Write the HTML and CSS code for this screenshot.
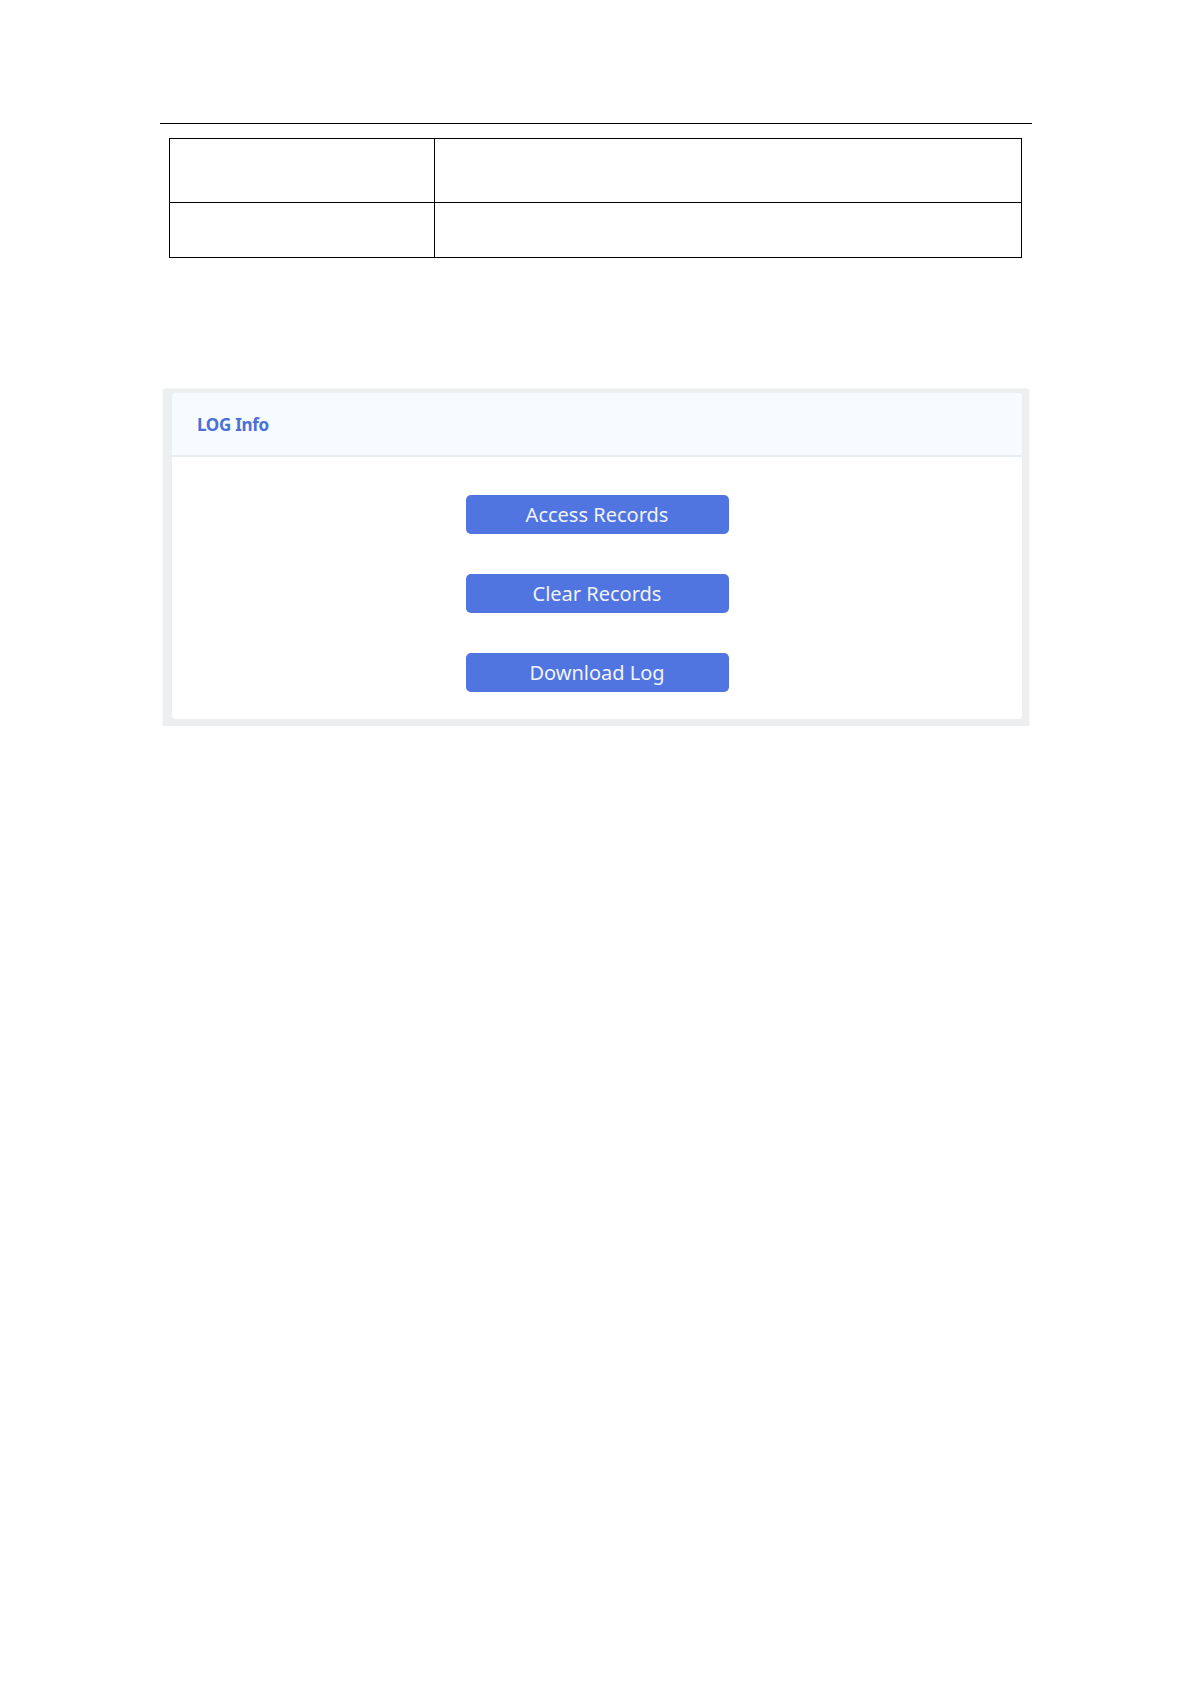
FILE: index.html
```html
<!DOCTYPE html>
<html lang="en">
<head>
    <meta charset="UTF-8">
    <meta name="viewport" content="width=device-width, initial-scale=1.0">
    <title>LOG Info</title>
    <link rel="stylesheet" href="styles.css">
</head>
<body>
    <div class="page">
        <hr class="rule">

        <table class="doc-table">
            <tr class="row-tall">
                <td class="col-key"></td>
                <td class="col-val"></td>
            </tr>
            <tr class="row-short">
                <td class="col-key"></td>
                <td class="col-val"></td>
            </tr>
        </table>

        <div class="shot">
            <div class="card">
                <div class="card-head">LOG Info</div>
                <div class="card-body">
                    <button class="btn">Access Records</button>
                    <button class="btn">Clear Records</button>
                    <button class="btn">Download Log</button>
                </div>
            </div>
        </div>
    </div>
</body>
</html>
```

FILE: styles.css
```css
body { margin: 0; background-color: #fff; font-family: "Noto Sans", "Open Sans", sans-serif; }
.page { width: 872px; padding: 123px 0 0 160px; }
.rule { height: 0; margin: 0; border: none; border-top: 1.5px solid #000; }
.doc-table { width: 853px; margin: 14px 0 0 9px; border-collapse: collapse; }
.doc-table td { border: 1.5px solid #000; padding: 0; }
.col-key { width: 264px; }
.row-tall { height: 64px; }
.row-short { height: 55px; }
.shot { width: 850px; margin: 131px 0 0 3px; padding: 4px 7px 7px 9px; background-color: #eceef0; box-shadow: 0 0 3px #eceef0; }
.card { background-color: #fff; border-radius: 4px; overflow: hidden; }
.card-head { height: 62px; line-height: 63px; padding-left: 25px; background-color: #f6fbfd; border-bottom: 2px solid #e8edf1; color: #4b6fd9; font-size: 17px; font-weight: bold; letter-spacing: -0.3px; }
.card-body { display: flex; flex-direction: column; align-items: center; gap: 40px; padding: 38px 0 27px; }
.btn { width: 263px; height: 39px; padding: 0; background-color: #5075e1; color: #f1f3fa; border: none; border-radius: 5px; font-family: "Noto Sans", sans-serif; font-size: 20px; cursor: pointer; }
```
